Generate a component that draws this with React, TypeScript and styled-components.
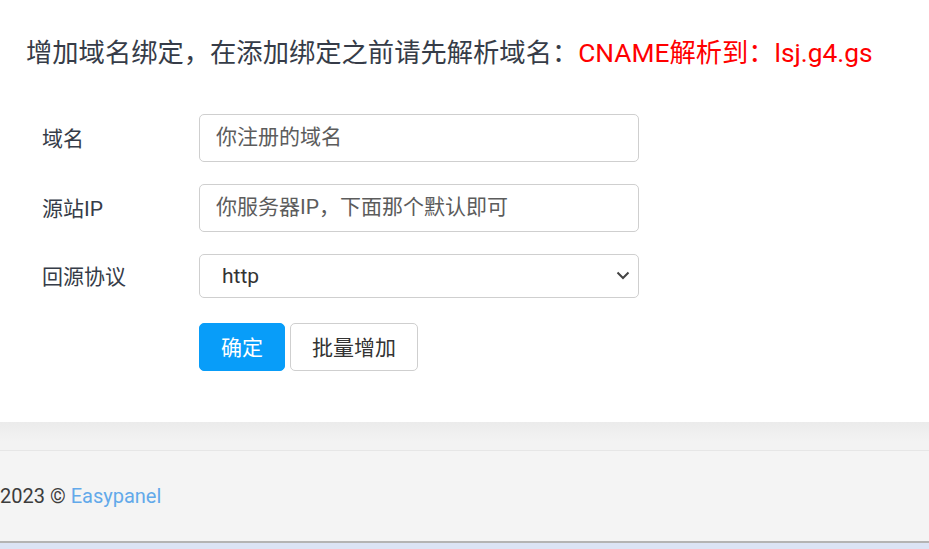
import React from 'react';
import styled, { createGlobalStyle } from 'styled-components';

const GlobalStyle = createGlobalStyle`
  html, body {
    margin: 0;
    padding: 0;
    background: #f4f4f4;
  }
  body {
    font-family: Roboto, "Noto Sans CJK SC", "Liberation Sans", sans-serif;
    color: #333;
    overflow: hidden;
  }
  * { box-sizing: border-box; }
`;

const Page = styled.div`
  display: flex;
  flex-direction: column;
  width: 929px;
  height: 549px;
`;

const Panel = styled.section`
  background: #fff;
  padding: 37px 26px 51px;
`;

const Heading = styled.h2`
  margin: 0 0 45px;
  font-size: 26.3px;
  font-weight: 400;
  line-height: 32px;
  color: #363c48;
  white-space: nowrap;
`;

const Hint = styled.span`
  color: #ff0000;
`;

const Form = styled.form`
  display: grid;
  grid-template-columns: 157px 440px;
  row-gap: 22px;
  padding-left: 16px;
`;

const Label = styled.label`
  display: flex;
  align-items: center;
  padding-bottom: 3px;
  font-size: 21px;
  color: #363c48;
`;

const TextInput = styled.input`
  height: 48px;
  padding: 0 16px 2px;
  border: 1px solid #cfcfcf;
  border-radius: 5px;
  font-family: inherit;
  font-size: 21px;
  color: #333;
  outline: none;

  &::placeholder {
    color: #5c5c5c;
  }
`;

const SelectWrap = styled.div`
  position: relative;
  height: 44px;
`;

const Select = styled.select`
  appearance: none;
  width: 100%;
  height: 100%;
  padding: 0 22px;
  border: 1px solid #cfcfcf;
  border-radius: 5px;
  background: #fff;
  font-family: inherit;
  font-size: 21px;
  color: #333;
  outline: none;
`;

const Chevron = styled.svg`
  position: absolute;
  right: 9px;
  top: 50%;
  margin-top: -5px;
  pointer-events: none;
`;

const Actions = styled.div`
  grid-column: 2;
  display: flex;
  gap: 5px;
  margin-top: 3px;
`;

const Button = styled.button<{ $primary?: boolean }>`
  height: 48px;
  padding: 0 21px 3px;
  border-radius: 5px;
  border: 1px solid ${p => (p.$primary ? '#089df9' : '#cfcfcf')};
  background: ${p => (p.$primary ? '#089df9' : '#fff')};
  color: ${p => (p.$primary ? '#fff' : '#333')};
  font-family: inherit;
  font-size: 21px;
  cursor: pointer;
`;

const ShadowGap = styled.div`
  height: 29px;
  background: linear-gradient(#ebebeb, #f3f3f3 70%);
  border-bottom: 1px solid #e6e6e6;
`;

const Footer = styled.footer`
  display: flex;
  align-items: center;
  height: 90px;
  background: #f4f4f4;
  font-size: 20px;
  color: #3c3c3c;
`;

const FooterLink = styled.a`
  color: #62a9ea;
  text-decoration: none;
  margin-left: 5px;
`;

const BottomBar = styled.div`
  flex: 1;
  border-top: 2px solid #b4b4b4;
  background: #dce4f5;
`;

export default function App() {
  return (
    <>
      <GlobalStyle />
      <Page>
        <Panel>
          <Heading>
            增加域名绑定，在添加绑定之前请先解析域名：<Hint>CNAME解析到：lsj.g4.gs</Hint>
          </Heading>
          <Form onSubmit={e => e.preventDefault()}>
            <Label>域名</Label>
            <TextInput placeholder="你注册的域名" />

            <Label>源站IP</Label>
            <TextInput placeholder="你服务器IP，下面那个默认即可" />

            <Label>回源协议</Label>
            <SelectWrap>
              <Select defaultValue="http">
                <option value="http">http</option>
                <option value="https">https</option>
              </Select>
              <Chevron width="14" height="9" viewBox="0 0 14 9">
                <path d="M1.5 1.5 7 7l5.5-5.5" fill="none" stroke="#444" strokeWidth="2" />
              </Chevron>
            </SelectWrap>

            <Actions>
              <Button $primary>确定</Button>
              <Button type="button">批量增加</Button>
            </Actions>
          </Form>
        </Panel>
        <ShadowGap />
        <Footer>
          2023 ©<FooterLink href="#">Easypanel</FooterLink>
        </Footer>
        <BottomBar />
      </Page>
    </>
  );
}
